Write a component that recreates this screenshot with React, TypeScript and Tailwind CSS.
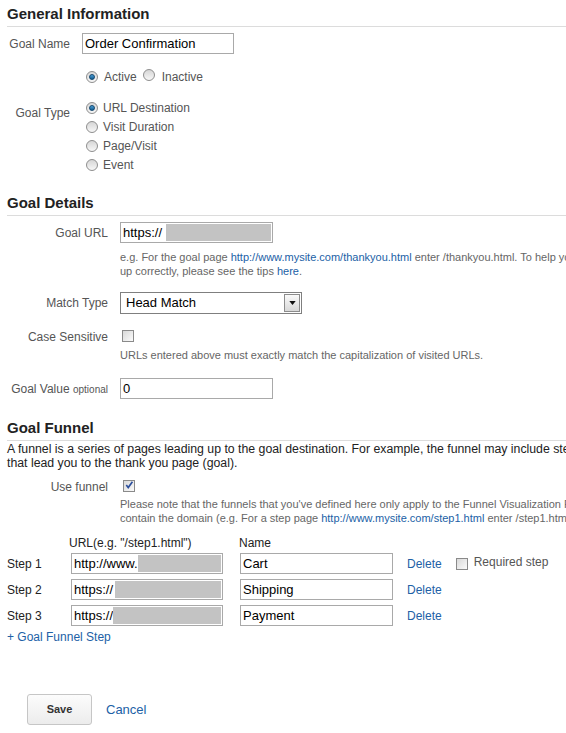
import React from 'react';

const LINK = 'text-[#2161a6]';

function Radio({ checked }: { checked?: boolean }) {
  return (
    <span className="inline-flex w-[12px] h-[12px] shrink-0 items-center justify-center rounded-full border border-[#8e8e8e] bg-linear-to-b from-[#d6d6d6] to-[#f7f7f7]">
      {checked && (
        <span className="w-[6px] h-[6px] rounded-full border border-[#12466e] bg-linear-to-b from-[#4a9fd6] to-[#135d92]" />
      )}
    </span>
  );
}

function Checkbox({ checked }: { checked?: boolean }) {
  return (
    <span className="relative inline-block w-[12px] h-[12px] shrink-0 border border-[#8a8a8a] bg-linear-to-br from-[#d9d9d9] to-[#fbfbfb]">
      {checked && (
        <svg viewBox="0 0 12 12" className="absolute left-[0px] top-[-1px] w-[11px] h-[11px]">
          <path d="M2.5 5.5 L4.6 8.2 L9.2 1.8" fill="none" stroke="#2c4f9c" strokeWidth="1.8" />
        </svg>
      )}
    </span>
  );
}

function TextBox({ value, redactFrom, width = 'w-[153px]' }: { value: string; redactFrom?: number; width?: string }) {
  return (
    <div className={`relative ${width} h-[21px] shrink-0 border border-[#a9a9a9] bg-white flex items-center pl-[2px] text-[13px] text-black overflow-hidden`}>
      <span>{value}</span>
      {redactFrom !== undefined && (
        <span className="absolute top-[1px] bottom-[1px] right-[1px] bg-[#c3c3c3]" style={{ left: redactFrom }} />
      )}
    </div>
  );
}

function Heading({ children, top }: { children: React.ReactNode; top: string }) {
  return (
    <div className={`${top} pb-[3px] border-b border-[#dcdcdc] text-[15px] leading-[18px] font-bold text-[#222]`}>
      {children}
    </div>
  );
}

export default function App() {
  const steps = [
    { n: 1, url: 'http://www.', redact: 66, name: 'Cart' },
    { n: 2, url: 'https://', redact: 43, name: 'Shipping' },
    { n: 3, url: 'https://', redact: 41, name: 'Payment' },
  ];

  return (
    <div className="w-[566px] h-[733px] overflow-hidden bg-white font-['Liberation_Sans',Arial,sans-serif]">
      <div className="w-[760px] pl-[7px] whitespace-nowrap">
        {/* General Information */}
        <Heading top="pt-[5px]">General Information</Heading>

        <div className="mt-[6px] flex items-center">
          <div className="w-[75px] pr-[12px] text-right text-[12px] text-[#555]">Goal Name</div>
          <TextBox value="Order Confirmation" width="w-[152px]" />
        </div>

        <div className="mt-[14px] h-[18px] flex items-center pl-[79px] text-[12px] text-[#555]">
          <Radio checked />
          <span className="ml-[6px]">Active</span>
          <span className="ml-[6px]"><Radio /></span>
          <span className="ml-[7px]">Inactive</span>
        </div>

        <div className="mt-[12px] flex">
          <div className="w-[75px] pr-[12px] pt-[6px] text-right text-[12px] text-[#555]">Goal Type</div>
          <div className="flex flex-col pl-[4px] text-[12px] text-[#555]">
            {['URL Destination', 'Visit Duration', 'Page/Visit', 'Event'].map((t, i) => (
              <div key={t} className="h-[19px] flex items-center">
                <Radio checked={i === 0} />
                <span className="ml-[5px]">{t}</span>
              </div>
            ))}
          </div>
        </div>

        {/* Goal Details */}
        <Heading top="mt-[20px]">Goal Details</Heading>

        <div className="mt-[6px] flex items-center">
          <div className="w-[113px] pr-[12px] text-right text-[12px] text-[#555]">Goal URL</div>
          <TextBox value="https://" redactFrom={45} />
        </div>
        <div className="mt-[7px] pl-[113px] text-[11px] leading-[14px] text-[#666]">
          e.g. For the goal page <span className={LINK}>http://www.mysite.com/thankyou.html</span> enter /thankyou.html. To help you verify that your goal is set
          <br />
          up correctly, please see the tips <span className={LINK}>here</span>.
        </div>

        <div className="mt-[14px] flex items-center">
          <div className="w-[113px] pr-[12px] text-right text-[12px] text-[#555]">Match Type</div>
          <div className="w-[182px] h-[22px] border border-[#7f7f7f] bg-white flex items-center justify-between">
            <span className="pl-[5px] text-[13px] text-black">Head Match</span>
            <span className="w-[16px] h-[18px] mr-[1px] border border-[#8c8c8c] bg-linear-to-b from-[#fafafa] to-[#d8d8d8] flex items-center justify-center">
              <svg viewBox="0 0 8 5" className="w-[7px] h-[4px]">
                <path d="M0 0 H8 L4 5 Z" fill="#111" />
              </svg>
            </span>
          </div>
        </div>

        <div className="mt-[16px] flex items-center h-[14px]">
          <div className="w-[113px] pr-[12px] text-right text-[12px] text-[#555]">Case Sensitive</div>
          <span className="ml-[2px]"><Checkbox /></span>
        </div>
        <div className="mt-[4px] pl-[113px] text-[11px] leading-[14px] text-[#666]">
          URLs entered above must exactly match the capitalization of visited URLs.
        </div>

        <div className="mt-[16px] flex items-center">
          <div className="w-[113px] pr-[12px] text-right text-[12px] text-[#555]">
            Goal Value <span className="text-[10px]">optional</span>
          </div>
          <TextBox value="0" />
        </div>

        {/* Goal Funnel */}
        <Heading top="mt-[20px]">Goal Funnel</Heading>

        <div className="mt-[1px] text-[12.3px] leading-[14px] text-[#222]">
          A funnel is a series of pages leading up to the goal destination. For example, the funnel may include steps in your checkout process
          <br />
          that lead you to the thank you page (goal).
        </div>

        <div className="mt-[10px] flex items-center h-[14px]">
          <div className="w-[113px] pr-[12px] text-right text-[12px] text-[#555]">Use funnel</div>
          <span className="ml-[3px]"><Checkbox checked /></span>
        </div>
        <div className="mt-[3px] pl-[113px] text-[11px] leading-[14px] text-[#666]">
          Please note that the funnels that you've defined here only apply to the Funnel Visualization Report. URLs should not
          <br />
          contain the domain (e.g. For a step page <span className={LINK}>http://www.mysite.com/step1.html</span> enter /step1.html)
        </div>

        <div className="mt-[11px] flex text-[12px] leading-[14px] text-[#222]">
          <span className="w-[232px] pl-[62px]">URL(e.g. "/step1.html")</span>
          <span>Name</span>
        </div>

        <div className="mt-[3px] flex flex-col gap-[5px]">
          {steps.map((s) => (
            <div key={s.n} className="flex items-center">
              <div className="w-[64px] text-[12px] text-[#222]">Step {s.n}</div>
              <TextBox value={s.url} redactFrom={s.redact} width="w-[152px]" />
              <div className="ml-[17px]">
                <TextBox value={s.name} />
              </div>
              <span className={`ml-[14px] text-[12px] ${LINK}`}>Delete</span>
              {s.n === 1 && (
                <span className="ml-[14px] flex items-center text-[12px] text-[#555]">
                  <Checkbox />
                  <span className="ml-[6px] -mt-[4px]">Required step</span>
                </span>
              )}
            </div>
          ))}
        </div>

        <div className={`mt-[4px] text-[12px] leading-[14px] ${LINK}`}>+ Goal Funnel Step</div>

        <div className="mt-[50px] flex items-center">
          <button className="ml-[20px] w-[65px] h-[31px] rounded-[3px] border border-[#c6c6c6] bg-linear-to-b from-[#fcfcfc] to-[#ececec] text-[11px] font-bold text-[#333]">
            Save
          </button>
          <span className={`ml-[14px] text-[13px] ${LINK}`}>Cancel</span>
        </div>
      </div>
    </div>
  );
}
